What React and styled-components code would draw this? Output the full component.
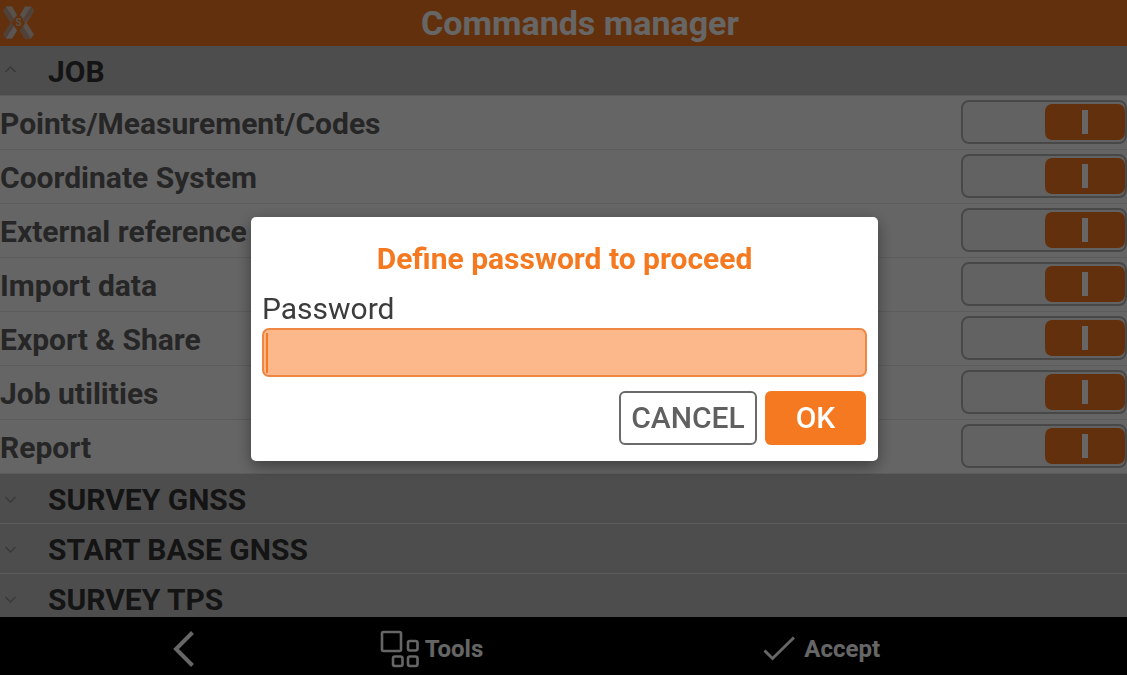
import { useState } from 'react'
import styled, { createGlobalStyle } from 'styled-components'

const GlobalStyle = createGlobalStyle`
    * {
        box-sizing: border-box;
    }

    body {
        margin: 0;
        font-family: Roboto, "Liberation Sans", sans-serif;
    }

    button, input {
        font-family: inherit;
    }
`

const Page = styled.div`
    display: flex;
    flex-direction: column;
    height: 100vh;
    overflow: hidden;
    background: #fff;
`

const Header = styled.header`
    display: grid;
    grid-template-columns: 36px 1fr;
    align-items: center;
    flex: none;
    height: 46px;
    padding: 0 6px 0 3px;
    background: #f57920;
`

const Title = styled.h1`
    margin: 0;
    font-size: 34px;
    line-height: 44px;
    font-weight: 700;
    text-align: center;
    color: #fff;
`

const Content = styled.main`
    flex: 1;
    min-height: 0;
    overflow: hidden;
`

const SectionTitle = styled.h2`
    margin: 0;
`

const SectionButton = styled.button`
    display: flex;
    align-items: center;
    gap: 32px;
    width: 100%;
    height: 50px;
    padding: 2px 0 0 5px;
    border: 0;
    border-bottom: 1px solid #e4e4e4;
    background: #c1c1c1;
    color: #333;
    font-size: 30px;
    font-weight: 700;
    text-align: left;
`

const Rows = styled.ul`
    margin: 0;
    padding: 0;
    list-style: none;
`

const Row = styled.li`
    display: flex;
    align-items: center;
    justify-content: space-between;
    height: 54px;
    padding-bottom: 1px;
    border-bottom: 1px solid #e6e6e6;
    background: #fcfcfc;
`

const RowLabel = styled.label`
    padding-top: 2px;
    font-size: 30px;
    font-weight: 700;
    color: #606060;
`

const Switch = styled.input`
    appearance: none;
    display: flex;
    align-items: center;
    justify-content: flex-start;
    width: 166px;
    height: 44px;
    margin: 0;
    padding: 0;
    border: 2px solid #b4b4b4;
    border-radius: 8px;
    background: #f4f4f4;

    &::before {
        content: '';
        width: 80px;
        height: 36px;
        border-radius: 7px;
        background: linear-gradient(#fff, #fff) center / 6px 24px no-repeat #b4b4b4;
    }

    &:checked {
        justify-content: flex-end;
    }

    &:checked::before {
        background-color: #f57920;
    }
`

const Footer = styled.footer`
    display: grid;
    grid-template-columns: 95fr 96fr 91fr;
    align-items: center;
    flex: none;
    height: 58px;
    padding-top: 6px;
    background: #000;
`

const FooterButton = styled.button`
    display: flex;
    align-items: center;
    justify-content: ${props => props.$center ? 'center' : 'flex-start'};
    gap: ${props => props.$gap || 0}px;
    padding: ${props => props.$center ? '0 14px 0 0' : '0'};
    border: 0;
    background: none;
    color: #fff;
    font-size: 24px;
    font-weight: 700;
`

const Overlay = styled.div`
    position: fixed;
    inset: 0;
    display: flex;
    align-items: center;
    justify-content: center;
    padding: 3px 0 0 2px;
    background: rgba(0, 0, 0, 0.6);
`

const Dialog = styled.form`
    display: flex;
    flex-direction: column;
    width: calc(100% - 40px);
    max-width: 627px;
    padding: 24px 11px 16px;
    border-radius: 5px;
    background: #fff;
    box-shadow: 0 5px 16px rgba(0, 0, 0, 0.4);
`

const DialogTitle = styled.h2`
    margin: 0 0 14px;
    font-size: 30px;
    line-height: 36px;
    font-weight: 700;
    text-align: center;
    color: #f57920;
`

const FieldLabel = styled.label`
    font-size: 30px;
    line-height: 36px;
    color: #3c3c3c;
`

const PasswordInput = styled.input`
    height: 49px;
    margin: 1px 0 14px;
    padding: 0 4px;
    border: 2px solid #ed8743;
    border-radius: 7px;
    background: linear-gradient(#f57920, #f57920) 2px center / 2px 40px no-repeat #fcb78a;
    caret-color: transparent;
    font-size: 30px;
    outline: none;
`

const Actions = styled.div`
    display: flex;
    justify-content: flex-end;
    gap: 8px;
    padding-right: 1px;
`

const DialogButton = styled.button`
    width: ${props => props.$primary ? 101 : 138}px;
    height: 54px;
    padding: 0 0 1px;
    border: ${props => props.$primary ? '0' : '2px solid #6a6a6a'};
    border-radius: 6px;
    background: ${props => props.$primary ? '#f57920' : '#fff'};
    color: ${props => props.$primary ? '#fff' : '#606060'};
    font-size: 30px;
    font-weight: 500;
`

const commands = [
    'Points/Measurement/Codes',
    'Coordinate System',
    'External reference',
    'Import data',
    'Export & Share',
    'Job utilities',
    'Report',
]

const Logo = () => (
    <svg width="32" height="34" viewBox="0 0 32 34" aria-hidden="true">
        <path d="M0 5 3 .5h6L14 9l-2 2.500-3 5.500-2-1z" fill="#c9a48c" />
        <path d="M3 .5h6L14 9l-3 4z" fill="#dccabd" />
        <path d="M31 5 28 .5h-6L17 9l2 2.500 3 5.500 2-1z" fill="#dccabd" />
        <path d="M31 5 28 .5 20 13l2 4z" fill="#c9a48c" />
        <path d="M0 28.500 8 16l6 8.500L9 32.500H3z" fill="#c9a48c" />
        <path d="M3 32.500h6l5-8-3-4.500z" fill="#e3d8d0" />
        <path d="M31 28.500 23 16l-6 8.500 5 8h6z" fill="#dccabd" />
        <path d="M17 24.500l3-4.500 8 12.500h-6z" fill="#c9a48c" />
        <circle cx="15.500" cy="16.500" r="5" fill="#f57920" />
        <text x="15.500" y="20" textAnchor="middle" fontSize="10" fontWeight="700" fill="#dccabd">S</text>
    </svg>
)

const Chevron = ({ up }) => (
    <svg width="11" height="12" viewBox="0 0 11 12" fill="none" stroke="#8c8c8c" strokeWidth="1.4" aria-hidden="true">
        <path d={up ? 'M.5 6l5-5 5 5' : 'M.5 3l5 5 5-5'} />
    </svg>
)

const BackIcon = () => (
    <svg width="22" height="36" viewBox="0 0 22 36" fill="none" stroke="currentColor" strokeWidth="4" aria-hidden="true">
        <path d="M20.500 1.500 4 18l16.500 16.500" />
    </svg>
)

const ToolsIcon = () => (
    <svg width="39" height="38" viewBox="0 0 39 38" fill="none" stroke="currentColor" strokeWidth="2.6" aria-hidden="true">
        <rect x="2" y="2" width="19" height="19" rx="1.500" />
        <rect x="28" y="11" width="9.500" height="9.500" rx="2" />
        <rect x="13" y="26.500" width="9.500" height="9.500" rx="2" />
        <rect x="28" y="26.500" width="9.500" height="9.500" rx="2" />
    </svg>
)

const CheckIcon = () => (
    <svg width="32" height="26" viewBox="0 0 32 26" fill="none" stroke="currentColor" strokeWidth="3" aria-hidden="true">
        <path d="M1.500 14.500l8 8L31 1.500" />
    </svg>
)

const Section = ({ title, open, onToggle, children }) => (
    <section>
        <SectionTitle>
            <SectionButton type="button" aria-expanded={open} onClick={onToggle}>
                <Chevron up={open} />
                {title}
            </SectionButton>
        </SectionTitle>
        {open && children}
    </section>
)

const App = () => {
    const [jobOpen, setJobOpen] = useState(true)
    const [dialogOpen, setDialogOpen] = useState(true)
    const [password, setPassword] = useState('')

    const closeDialog = event => {
        event.preventDefault()
        setDialogOpen(false)
    }

    return (
        <>
            <GlobalStyle />
            <Page>
                <Header>
                    <Logo />
                    <Title>Commands manager</Title>
                </Header>
                <Content>
                    <Section title="JOB" open={jobOpen} onToggle={() => setJobOpen(!jobOpen)}>
                        <Rows>
                            {commands.map((command, index) => (
                                <Row key={command}>
                                    <RowLabel htmlFor={`command-${index}`}>{command}</RowLabel>
                                    <Switch id={`command-${index}`} type="checkbox" role="switch" defaultChecked />
                                </Row>
                            ))}
                        </Rows>
                    </Section>
                    <Section title="SURVEY GNSS" open={false} />
                    <Section title="START BASE GNSS" open={false} />
                    <Section title="SURVEY TPS" open={false} />
                </Content>
                <Footer>
                    <FooterButton type="button" aria-label="Back" $center>
                        <BackIcon />
                    </FooterButton>
                    <FooterButton type="button" $gap={6}>
                        <ToolsIcon />
                        Tools
                    </FooterButton>
                    <FooterButton type="button" $gap={9}>
                        <CheckIcon />
                        Accept
                    </FooterButton>
                </Footer>
            </Page>
            {dialogOpen && (
                <Overlay>
                    <Dialog role="dialog" aria-labelledby="dialog-title" onSubmit={closeDialog}>
                        <DialogTitle id="dialog-title">Define password to proceed</DialogTitle>
                        <FieldLabel htmlFor="password">Password</FieldLabel>
                        <PasswordInput
                            id="password"
                            type="password"
                            value={password}
                            onChange={event => setPassword(event.target.value)}
                        />
                        <Actions>
                            <DialogButton type="button" onClick={closeDialog}>CANCEL</DialogButton>
                            <DialogButton type="submit" $primary>OK</DialogButton>
                        </Actions>
                    </Dialog>
                </Overlay>
            )}
        </>
    )
}

export default App
